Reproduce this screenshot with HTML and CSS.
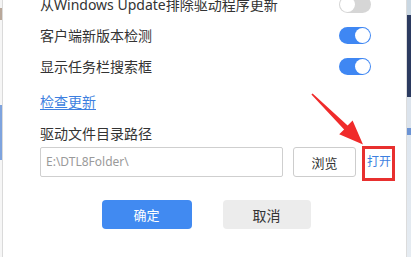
FILE: index.html
```html
<!DOCTYPE html>
<html lang="zh-CN">
<head>
<meta charset="utf-8">
<title>设置</title>
<link rel="stylesheet" href="styles.css">
</head>
<body>
<div class="screen">
  <div class="edge-left"></div>
  <div class="panel">
    <div class="toggles">
      <div class="row"><span>从Windows Update排除驱动程序更新</span><span class="switch"></span></div>
      <div class="row"><span>客户端新版本检测</span><span class="switch on"></span></div>
      <div class="row"><span>显示任务栏搜索框</span><span class="switch on"></span></div>
    </div>
    <a class="link" href="#">检查更新</a>
    <div class="label">驱动文件目录路径</div>
    <div class="path-row">
      <div class="input">E:\DTL8Folder\</div>
      <button class="btn-browse">浏览</button>
      <a class="open" href="#">打开</a>
    </div>
    <div class="actions">
      <button class="btn primary">确定</button>
      <button class="btn secondary">取消</button>
    </div>
  </div>
  <div class="edge-right"></div>
  <svg class="annotation" width="411" height="257" viewBox="0 0 411 257">
    <polygon fill="#f02b2b" points="311.4,94.6 344.1,129.4 339.2,134.2 363,144.5 352.6,120.6 347.6,125.6 312.6,93.4"/>
    <rect x="363.5" y="147.5" width="30" height="32" fill="none" stroke="#e8302f" stroke-width="3"/>
  </svg>
</div>
</body>
</html>
```

FILE: styles.css
```css
* { box-sizing: border-box; }
html, body { margin: 0; padding: 0; background: #fff; }
body {
  font-family: "Noto Sans", "Noto Sans CJK SC", sans-serif;
  color: #333;
  font-size: 14px;
}
.screen {
  position: relative;
  width: 411px;
  height: 257px;
  display: flex;
  overflow: hidden;
}
.edge-left {
  width: 2px;
  flex: none;
  background: linear-gradient(to bottom,
    #f4f4f4 0, #f4f4f4 8px, #b9a89a 8px, #b9a89a 20px,
    #f6f6f6 20px, #f6f6f6 105px, #7ea3de 105px, #7ea3de 160px,
    #f6f6f6 160px);
}
.panel {
  width: 405px;
  flex: none;
  border-left: 1px solid #dadada;
  border-right: 1px solid #dcdcdc;
  padding: 0 35px 0 37px;
  display: flex;
  flex-direction: column;
}
.edge-right {
  width: 4px;
  flex: none;
  background: linear-gradient(to bottom,
    #c9d7e2 0, #c9d7e2 15px, #2b3a60 15px, #2b3a60 97px,
    #dbe3ec 97px, #dbe3ec 128px, #6b93d4 128px, #6b93d4 135px,
    #dde5ee 135px, #e6ecf2 257px);
}
.toggles { margin-top: -11px; }
.row {
  height: 31px;
  display: flex;
  align-items: center;
  justify-content: space-between;
  line-height: 20px;
  white-space: nowrap;
}
.switch {
  position: relative;
  width: 32px;
  height: 17px;
  border-radius: 9px;
  background: #d6d6d6;
  flex: none;
}
.switch::after {
  content: "";
  position: absolute;
  left: 1px;
  top: 1px;
  width: 15px;
  height: 15px;
  border-radius: 50%;
  background: #fff;
}
.switch.on { background: #3f87f3; }
.switch.on::after { left: 16px; }
.link {
  margin-top: 10px;
  height: 20px;
  line-height: 20px;
  color: #3d7fe0;
  text-decoration: underline;
  text-underline-offset: 2px;
  align-self: flex-start;
}
.label {
  margin-top: 11px;
  height: 21px;
  line-height: 21px;
}
.path-row {
  margin-top: 3px;
  height: 30px;
  display: flex;
  align-items: center;
  white-space: nowrap;
}
.input {
  flex: none;
  width: 243px;
  height: 30px;
  border: 1px solid #cfcfcf;
  border-radius: 2px;
  padding-left: 5px;
  line-height: 28px;
  font-size: 12px;
  color: #9a9a9a;
}
.btn-browse {
  flex: none;
  margin-left: 10px;
  width: 63px;
  height: 30px;
  border: 1px solid #cdcdcd;
  border-radius: 3px;
  background: #fff;
  font: inherit;
  font-size: 13px;
  color: #333;
  padding: 0;
}
.open {
  flex: none;
  margin-left: 11px;
  color: #3d7fe0;
  text-decoration: none;
  line-height: 20px;
  font-size: 12px;
}
.actions {
  margin-top: 23px;
  display: flex;
  justify-content: center;
  gap: 31px;
  padding-left: 1px;
}
.btn {
  height: 29px;
  border: none;
  border-radius: 4px;
  font: inherit;
  padding: 0;
}
.primary { width: 90px; background: #418af1; color: #fff; font-size: 13px; }
.secondary { width: 88px; background: #ececec; color: #333; font-size: 14px; }
.annotation {
  position: absolute;
  left: 0;
  top: 0;
  pointer-events: none;
}
```
